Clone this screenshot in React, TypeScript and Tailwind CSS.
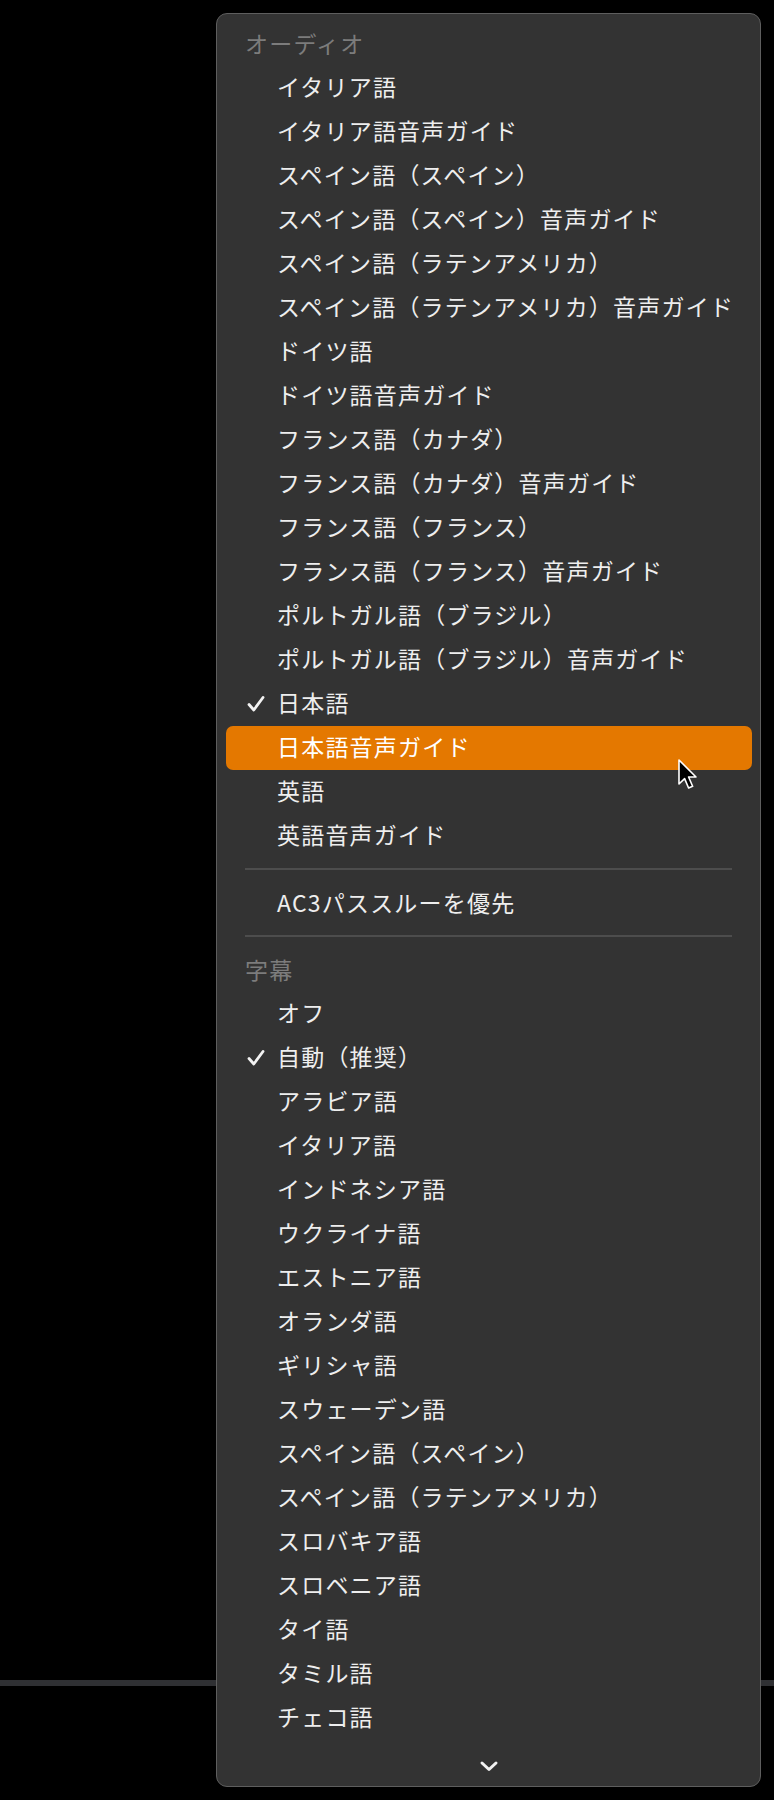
import React from "react"

type Item = { label: string; checked?: boolean; active?: boolean }

const audioItems: Item[] = [
    { label: "イタリア語" },
    { label: "イタリア語音声ガイド" },
    { label: "スペイン語（スペイン）" },
    { label: "スペイン語（スペイン）音声ガイド" },
    { label: "スペイン語（ラテンアメリカ）" },
    { label: "スペイン語（ラテンアメリカ）音声ガイド" },
    { label: "ドイツ語" },
    { label: "ドイツ語音声ガイド" },
    { label: "フランス語（カナダ）" },
    { label: "フランス語（カナダ）音声ガイド" },
    { label: "フランス語（フランス）" },
    { label: "フランス語（フランス）音声ガイド" },
    { label: "ポルトガル語（ブラジル）" },
    { label: "ポルトガル語（ブラジル）音声ガイド" },
    { label: "日本語", checked: true },
    { label: "日本語音声ガイド", active: true },
    { label: "英語" },
    { label: "英語音声ガイド" },
]

const subtitleItems: Item[] = [
    { label: "オフ" },
    { label: "自動（推奨）", checked: true },
    { label: "アラビア語" },
    { label: "イタリア語" },
    { label: "インドネシア語" },
    { label: "ウクライナ語" },
    { label: "エストニア語" },
    { label: "オランダ語" },
    { label: "ギリシャ語" },
    { label: "スウェーデン語" },
    { label: "スペイン語（スペイン）" },
    { label: "スペイン語（ラテンアメリカ）" },
    { label: "スロバキア語" },
    { label: "スロベニア語" },
    { label: "タイ語" },
    { label: "タミル語" },
    { label: "チェコ語" },
]

const Check = () => (
    <svg width="18" height="18" viewBox="0 0 18 18" fill="none">
        <path d="M2 9.5 L6.8 15 L16 2.5" stroke="#f2f2f2" strokeWidth="2.8" strokeLinecap="round" strokeLinejoin="round" />
    </svg>
)

const MenuItem = ({ item }: { item: Item }) => (
    <div
        className={`ml-[9px] mr-[8px] flex h-[44px] items-center rounded-[7px] pl-[21px] ${
            item.active ? "bg-[#e47800] text-white" : "text-[#eeeeee]"
        }`}
    >
        <span className="flex w-[30px] items-center">{item.checked && <Check />}</span>
        <span className="-mt-[3px] whitespace-nowrap text-[23px] leading-none tracking-[1.2px]">{item.label}</span>
    </div>
)

const Header = ({ text }: { text: string }) => (
    <div className="flex h-[42px] items-center pb-[4px] pl-[28px] text-[23px] leading-none tracking-[1.2px] text-[#7c7c7c]">
        {text}
    </div>
)

export default function App() {
    return (
        <div
            className="relative h-[1800px] w-[774px] overflow-hidden bg-black"
            style={{ fontFamily: '"Noto Sans CJK JP", "Noto Sans", sans-serif' }}
        >
            {/* player timeline behind the menu */}
            <div className="pt-[1680px]">
                <div className="h-[6px] w-full bg-[#2f3033]" />
            </div>

            {/* track popup */}
            <div className="absolute left-[216px] top-[13px] flex h-[1774px] w-[545px] flex-col overflow-hidden rounded-[11px] border border-[#5e5e5e] bg-[#333333]">
                <div className="min-h-0 flex-1 overflow-hidden pt-[10px]">
                    <Header text="オーディオ" />
                    {audioItems.map((item, i) => (
                        <MenuItem key={"a" + i} item={item} />
                    ))}
                    <div className="mx-[28px] mb-[12px] mt-[10px] h-[2px] bg-[#4d4d4d]" />
                    <MenuItem item={{ label: "AC3パススルーを優先" }} />
                    <div className="mx-[28px] mb-[13px] mt-[9px] h-[2px] bg-[#4d4d4d]" />
                    <Header text="字幕" />
                    {subtitleItems.map((item, i) => (
                        <MenuItem key={"s" + i} item={item} />
                    ))}
                </div>
                <div className="flex h-[40px] shrink-0 items-center justify-center">
                    <svg width="20" height="12" viewBox="0 0 20 12" fill="none">
                        <path d="M3 3 L10 9.5 L17 3" stroke="#f2f2f2" strokeWidth="3" strokeLinecap="round" strokeLinejoin="round" />
                    </svg>
                </div>
            </div>

            {/* mouse pointer */}
            <svg className="absolute left-[677px] top-[758px]" width="24" height="36" viewBox="0 0 24 36">
                <path
                    d="M2 2 L2 26 L7.6 20.6 L11.6 30 L15.6 28.3 L11.6 19 L19 19 Z"
                    fill="#000"
                    stroke="#fff"
                    strokeWidth="1.6"
                    strokeLinejoin="round"
                />
            </svg>
        </div>
    )
}
